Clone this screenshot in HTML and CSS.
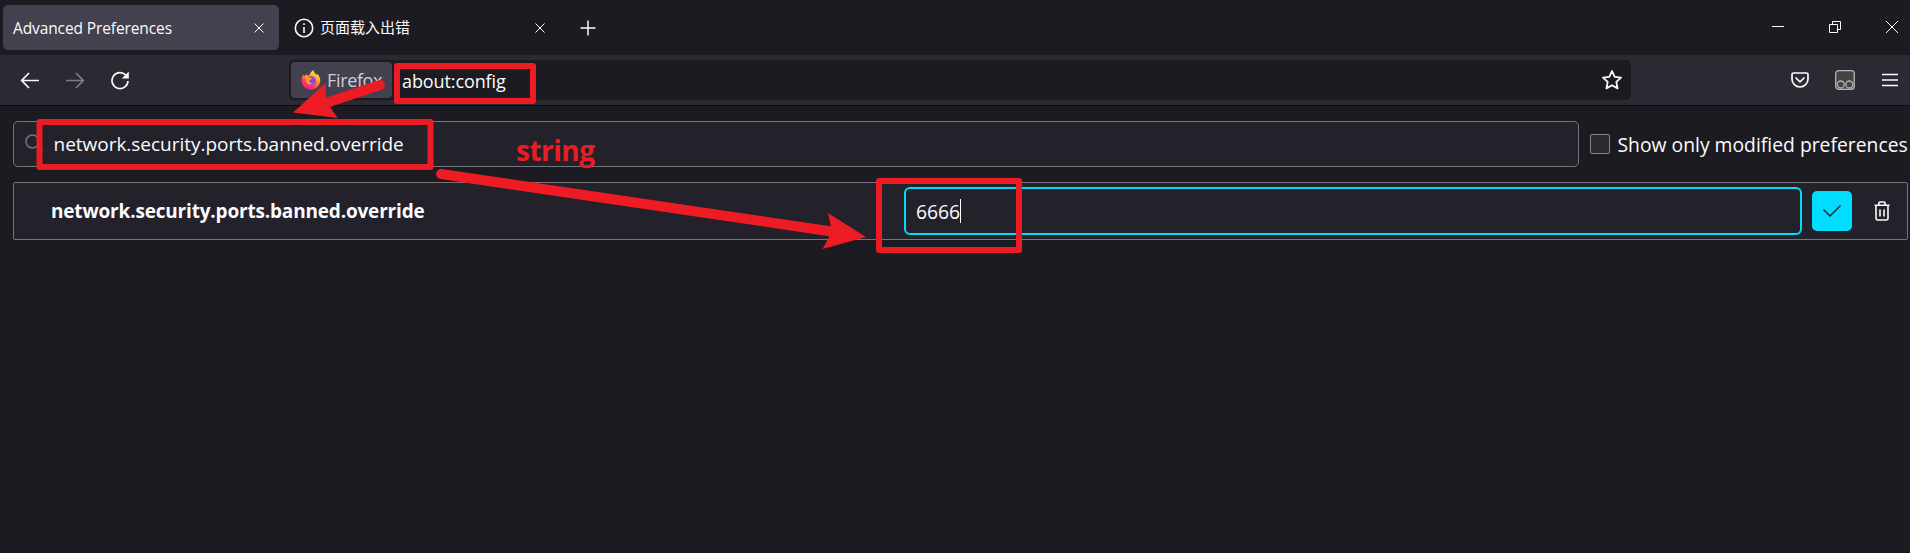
FILE: index.html
```html
<!DOCTYPE html>
<html lang="en">
<head>
<meta charset="utf-8">
<title>Advanced Preferences</title>
<link rel="stylesheet" href="styles.css">
</head>
<body>
<header class="tabs">
  <div class="tab active"><span class="t-adv">Advanced Preferences</span>
    <svg class="close" width="12" height="12" viewBox="0 0 12 12"><path d="M1.5 1.5l9 9m0-9l-9 9"/></svg></div>
  <div class="tab second">
    <svg class="info" width="20" height="20" viewBox="0 0 20 20"><circle cx="10" cy="10" r="8.7"/><path d="M10 9v6M10 5.2v1.8"/></svg>
    <span class="t-cn">页面载入出错</span>
    <svg class="close" width="12" height="12" viewBox="0 0 12 12"><path d="M1.5 1.5l9 9m0-9l-9 9"/></svg></div>
  <svg class="plus" width="16" height="16" viewBox="0 0 16 16"><path d="M8 .5v15M.5 8h15"/></svg>
  <div class="window-buttons">
    <svg width="12" height="14" viewBox="0 0 12 14"><path d="M0 6.5h12"/></svg>
    <svg width="12" height="12" viewBox="0 0 12 12"><path d="M.5 3.5h8v8h-8zM3.5 3.500v-3h8v8h-3"/></svg>
    <svg width="14" height="14" viewBox="0 0 14 14"><path d="M1 1l12 12m0-12L1 13"/></svg>
  </div>
</header>
<nav class="toolbar">
  <svg class="nav-icon" width="20" height="20" viewBox="0 0 20 20"><path d="M19 10.500H2M9 3L1.700 10.500L9 18"/></svg>
  <svg class="nav-icon dim" width="20" height="20" viewBox="0 0 20 20"><path d="M1 10.500h17M11 3L18.300 10.500L11 18"/></svg>
  <svg class="nav-icon" width="20" height="20" viewBox="0 0 20 20"><path d="M15.800 5.100A8 8 0 1 0 18 11"/><path class="solid" d="M18.800 1.500v7h-7z"/></svg>
  <div class="urlbar">
    <div class="identity">
      <svg width="20" height="20" viewBox="0 0 20 20">
        <defs>
          <linearGradient id="fox" x1=".8" y1="0" x2=".25" y2="1"><stop offset="0" stop-color="#fff44f"/><stop offset=".38" stop-color="#ffa02b"/><stop offset=".7" stop-color="#ff4055"/><stop offset="1" stop-color="#f0148c"/></linearGradient>
          <radialGradient id="globe"><stop offset="0" stop-color="#7542e5"/><stop offset="1" stop-color="#a044d8"/></radialGradient>
        </defs>
        <path fill="url(#fox)" d="M2.300 4.300L3.200 6C4 5 5 4.600 6 4.400L8 6C9 3.300 10 1.400 12.500 0C12.500 2 14 3.200 15 4.700L16 3.700C18.500 6 19.600 8.500 19.300 11C18.500 16 15 19.700 10 19.700C4.500 19.700.6 15.500.6 10.500C.6 8 1.300 6 2.300 4.300Z"/>
        <circle cx="10.400" cy="10.800" r="4.500" fill="url(#globe)"/>
        <path fill="#ff9a28" d="M4 6.500C6 5.800 7.400 6.400 8.600 7.700L11 8.200C10.600 9.400 9.300 9.700 8.400 10.300C8.300 12.500 10 13.400 12 12.600C10.800 15 7 15 5.500 12.500Z"/>
      </svg>
      <span class="t-firefox">Firefox</span>
    </div>
    <span class="t-url">about:config</span>
    <svg class="star" width="22" height="22" viewBox="0 0 22 22"><path d="M11 2l2.700 5.900 6.300.7-4.700 4.300 1.300 6.500L11 16.200 5.400 19.400l1.300-6.500L2 8.600l6.300-.7z"/></svg>
  </div>
  <div class="tools">
    <svg class="pocket" width="20" height="20" viewBox="0 0 20 20"><path d="M3.500 3h13Q18 3 18 4.500V9a8 8 0 0 1-16 0V4.500Q2 3 3.500 3zM6 8l4 3.800L14 8"/></svg>
    <svg class="monkey" width="20" height="20" viewBox="0 0 20 20"><rect x=".7" y=".7" width="18.600" height="18.600" rx="3"/><circle cx="5.700" cy="14.500" r="3.500"/><circle cx="14.300" cy="14.500" r="3.500"/></svg>
    <svg class="burger" width="16" height="14" viewBox="0 0 16 14"><path d="M.5 1.500h15M.5 7h15M.5 12.500h15"/></svg>
  </div>
</nav>
<main>
  <div class="search-row">
    <div class="search"><svg width="18" height="18" viewBox="0 0 18 18"><circle cx="7.500" cy="7.500" r="6.500"/><path d="M12.500 12.500l5 5"/></svg><span class="t-search">network.security.ports.banned.override</span></div>
    <span class="checkbox"></span><span class="t-show">Show only modified preferences</span>
  </div>
  <div class="pref">
    <div class="name"><span class="t-name">network.security.ports.banned.override</span></div>
    <div class="value"><span class="t-value">6666</span><i class="caret"></i></div>
    <div class="save"><svg width="20" height="14" viewBox="0 0 20 14"><path d="M1.500 5.500L8 12L18.500 1.500"/></svg></div>
    <svg class="trash" width="16" height="20" viewBox="0 0 16 20"><path d="M.5 4.200h15M4.800 4V2.500Q4.800 1 6.300 1h3.400q1.500 0 1.500 1.500V4M2 4.500V17q0 2 2 2h8q2 0 2-2V4.500M6 8.500v7M10 8.500v7"/></svg>
  </div>
</main>
<svg class="marks" width="1910" height="553" viewBox="0 0 1910 553">
  <g class="frame"><rect x="397" y="66" width="136" height="35"/><rect x="39.500" y="122" width="391" height="45"/><rect x="879" y="181" width="140" height="69"/></g>
  <path class="shaft" d="M380 85L329 102M441 174L835 232"/>
  <path class="head" d="M293 112.500L325.700 83L325.700 97L329.300 106L337.700 118ZM866 237L828 213L831 227L829 237L822.500 249Z"/>
</svg>
<div class="note">string</div>
</body>
</html>
```
FILE: styles.css
```css
* { box-sizing: border-box; }
body { margin: 0; width: 1910px; height: 553px; overflow: hidden; position: relative; background: #1c1b22; color: #fbfbfe; font-family: "Open Sans", "Noto Sans CJK SC", sans-serif; }
svg { flex: none; fill: none; stroke: #fbfbfe; stroke-width: 1.2; display: block; }
span { white-space: nowrap; }
.tabs { height: 55px; display: flex; align-items: center; padding-left: 3px; }
.tab { display: flex; align-items: center; justify-content: space-between; height: 45px; width: 276px; padding: 0 14px 0 10px; border-radius: 5px; }
.active { background: #42414d; }
.second { margin-left: 5px; }
.t-adv { font-size: 15.5px; letter-spacing: -.11px; }
.t-cn { font-family: "Noto Sans CJK SC", sans-serif; font-size: 15px; margin: -2px auto 0 6px; }
.close { stroke-width: 1; }
.info { stroke-width: 1.6; }
.plus { margin-left: 20px; stroke-width: 1.5; }
.window-buttons { margin-left: auto; display: flex; align-items: center; gap: 45px; padding-right: 11px; }
.window-buttons svg { stroke-width: 1; margin-top: -1px; }
.window-buttons svg:not(:last-child) { margin-right: -1px; margin-left: 1px; }
.toolbar { height: 51px; display: flex; align-items: center; padding: 0 12px 0 20px; background: #2b2a33; border-bottom: 1px solid #0c0c0d; }
.nav-icon { margin-right: 25px; stroke-width: 1.7; }
.dim { opacity: .4; }
.solid { fill: #fbfbfe; stroke: none; }
.urlbar { margin-left: 134px; width: 1342px; height: 40px; display: flex; align-items: center; background: #1c1b22; border-radius: 5px; padding: 0 8px 0 2px; }
.identity { width: 101px; height: 36px; display: flex; align-items: center; gap: 6px; padding-left: 10px; background: #42414d; border-radius: 4px; }
.identity svg { stroke: none; }
.t-firefox { font-size: 18px; letter-spacing: -.35px; color: #cfcfd8; }
.t-url { font-size: 18px; letter-spacing: -.1px; margin: 1px auto 0 10px; }
.star { stroke-width: 1.8; stroke-linejoin: round; }
.tools { margin-left: auto; display: flex; align-items: center; gap: 26px; }
.tools svg { stroke-width: 1.7; stroke-linecap: round; stroke-linejoin: round; }
.tools .pocket { margin-right: -1px; }
.tools .monkey { stroke: #b4b4b4; stroke-width: 1.3; }
.monkey rect { fill: #444; }
.burger { margin-left: 1px; }
main { padding: 15px 2px 0 13px; }
.search-row { display: flex; align-items: center; height: 46px; }
.search { width: 1566px; height: 46px; display: flex; align-items: center; padding-left: 11px; background: #23222b; border: 1px solid #76757c; border-radius: 5px; }
.search svg { stroke: #76757c; stroke-width: 1.5; margin-top: -2px; }
.t-search { margin-left: 10.500px; font-size: 19px; letter-spacing: -.02px; }
.checkbox { width: 20px; height: 20px; margin: 0 7.500px 0 11px; border: 1px solid #85848c; border-radius: 2px; background: #2b2a33; }
.t-show { font-size: 19.300px; letter-spacing: .02px; }
.pref { margin-top: 15px; height: 58px; display: flex; align-items: center; background: #23222b; border: 1px solid #76757c; border-radius: 2px; }
.name { width: 890px; padding-left: 37px; }
.t-name { font-size: 19px; font-weight: 700; letter-spacing: -.18px; }
.value { width: 898px; height: 48px; border: 2px solid #00ddff; border-radius: 6px; display: flex; align-items: center; padding-left: 10px; }
.t-value { font-size: 19.300px; }
.caret { width: 1px; height: 24px; background: #fff; }
.save { width: 40px; height: 40px; margin: 0 22px 0 10px; border-radius: 5px; background: #00ddff; display: grid; place-items: center; }
.save svg { stroke: #2b2a33; stroke-width: 1.5; }
.trash { stroke-width: 1.6; }
.marks { position: absolute; left: 0; top: 0; }
.frame { stroke: #ed1c24; stroke-width: 6; stroke-linejoin: round; }
.shaft { stroke: #ed1c24; stroke-width: 10; stroke-linecap: round; }
.head { fill: #ed1c24; stroke: none; }
.note { position: absolute; left: 516px; top: 130px; font-size: 28px; line-height: 40px; letter-spacing: -.5px; font-weight: 700; color: #ed1c24; }
```
